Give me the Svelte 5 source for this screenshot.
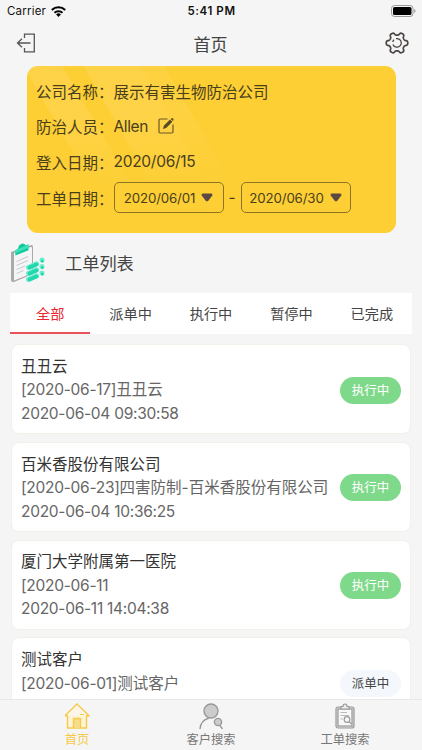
<script lang="ts">
  interface Order {
    customer: string;
    date: string;
    title: string;
    time: string;
    status: string;
  }

  const tabs = ["全部", "派单中", "执行中", "暂停中", "已完成"];

  const orders: Order[] = [
    { customer: "丑丑云", date: "[2020-06-17]", title: "丑丑云", time: "2020-06-04 09:30:58", status: "执行中" },
    { customer: "百米香股份有限公司", date: "[2020-06-23]", title: "四害防制-百米香股份有限公司", time: "2020-06-04 10:36:25", status: "执行中" },
    { customer: "厦门大学附属第一医院", date: "[2020-06-11", title: "", time: "2020-06-11 14:04:38", status: "执行中" },
    { customer: "测试客户", date: "[2020-06-01]", title: "测试客户", time: "", status: "派单中" },
  ];

  let activeTab = $state("全部");

  // six-toothed gear outline, centred on 12,12
  const gear = Array.from({ length: 120 }, (_, i) => {
    const a = (i / 120) * Math.PI * 2;
    const r = 9.3 + 1.5 * Math.tanh(2 * Math.cos(6 * a));
    return `${(12 + r * Math.cos(a)).toFixed(2)},${(12 + r * Math.sin(a)).toFixed(2)}`;
  }).join(" ");
</script>

{#snippet dateBox(value: string)}
  <button class="date-box">
    <span>{value}</span>
    <svg width="12" height="9" viewBox="0 0 12 9"><path d="M1.7.5h8.6q1.5.2 1 2L7.3 7.7Q6 9 4.7 7.7L.7 2.5Q.2.7 1.7.5z" fill="#5c4a42" /></svg>
  </button>
{/snippet}

<div class="screen">
  <div class="status-bar">
    <div class="carrier">
      <span>Carrier</span>
      <svg width="15" height="11" viewBox="0 0 15 11">
        <path d="M7.5 11 5.1 8.4a3.5 3.5 0 0 1 4.8 0z" />
        <g fill="none" stroke="#000" stroke-width="2">
          <path d="M3.5 6.8a5.8 5.8 0 0 1 8 0" />
          <path d="M.8 4a9.6 9.6 0 0 1 13.4 0" />
        </g>
      </svg>
    </div>
    <span class="clock">5:41 PM</span>
    <svg class="battery" width="25" height="12" viewBox="0 0 25 12">
      <rect x=".5" y=".5" width="21.5" height="11" rx="3" fill="none" stroke="#999" />
      <rect x="2" y="2" width="18.5" height="8" rx="1.6" />
      <path d="M23.2 4v4q1.3-.6 1.3-2t-1.3-2z" fill="#999" />
    </svg>
  </div>

  <header>
    <svg width="20" height="20" viewBox="0 0 20 20" fill="none" stroke="#555" stroke-width="1.3">
      <path d="M8.5 5V1.2h9.8v17.6H8.5V15M14.5 10H1.5M6 5.8 1.5 10 6 14.2" />
    </svg>
    <h1>首页</h1>
    <svg width="24" height="24" viewBox="0 0 24 24" fill="none" stroke="#4a4442" stroke-width="1.7" stroke-linejoin="round">
      <polygon points={gear} />
      <path d="M7.9 13.5a4.4 4.4 0 0 0 8.4-1.500 4.4 4.4 0 0 0-5.3-4.3M9 8.8a4.4 4.4 0 0 0-1.3 2.2" stroke-width="1.3" />
    </svg>
  </header>

  <section class="profile">
    <div class="field"><span>公司名称：</span><span>展示有害生物防治公司</span></div>
    <div class="field">
      <span>防治人员：</span><span class="name">Allen</span>
      <svg class="edit" width="16" height="16" viewBox="0 0 16 16">
        <path d="M9.5 1H2.2Q1 1 1 2.2v11.6Q1 15 2.2 15h11.6q1.2 0 1.2-1.2V6.5" fill="none" stroke="#6b5726" stroke-width="1.2" />
        <path d="m5 11 .8-3.2L12 1.5l2.4 2.3L8.1 10zM12.7.9l.7-.7Q14.2-.2 15 .6t.5 1.5l-.6.9z" fill="#594a25" />
      </svg>
    </div>
    <div class="field"><span>登入日期：</span><span class="num">2020/06/15</span></div>
    <div class="field">
      <span>工单日期：</span>
      {@render dateBox("2020/06/01")}
      <span class="dash">-</span>
      {@render dateBox("2020/06/30")}
    </div>
  </section>

  <div class="list-title">
    <svg width="36" height="40" viewBox="0 0 36 40">
      <path d="M1 9 21.5 2q1.5 0 1.5 1.5V31L4 39q-3 0-3-2z" fill="#aaa" />
      <path d="M4 10 20.5 4q1.5-.3 1.5 1.2v25L4 37.5z" fill="#f5f5f7" />
      <path d="M6.5 18.5 18 13.5M6.5 22.5 18 17.5M6.5 26.5 15 23M6.5 30.5l7-3" stroke="#c8c8cc" />
      <path d="m5 7.5 3-1.7q.2-3.5 3-4.8 3-1.3 4.6 1.2L18.5 1.5v5.7L5.5 12.5z" fill="#13c99a" />
      <path d="m5 7.5 13.5-6v3L5 10.5z" fill="#39e2bb" />
      <g stroke-linecap="round">
        <path d="m18.500 24.5 8-3.7M18.500 30.5l8-3.7M18.500 36.5l8-3.7M32 17v.1M32 23.5v.1M32 30v.1" stroke="#70edd0" stroke-width="5" />
        <path d="m19.500 24.5 7-3M19.500 30.5l7-3M19.500 36.5l7-3" stroke="#22d8ad" stroke-width="4" />
        <path d="M32.300 18v.1M32.300 24.5v.1M32.300 31v.1" stroke="#22d8ad" stroke-width="3" />
      </g>
    </svg>
    <h2>工单列表</h2>
  </div>

  <nav class="tabs">
    {#each tabs as tab}
      <button class:active={activeTab === tab} onclick={() => (activeTab = tab)}>{tab}</button>
    {/each}
  </nav>

  <main>
    {#each orders as order}
      <article>
        <div class="info">
          <h3>{order.customer}</h3>
          <p><span class="num">{order.date}</span>{order.title}</p>
          <p class="num">{order.time}</p>
        </div>
        <span class="badge" class:pending={order.status === "派单中"}>{order.status}</span>
      </article>
    {/each}
  </main>

  <footer>
    <button class="selected">
      <svg width="26" height="26" viewBox="0 0 26 26" fill="none" stroke="#f5cb4b" stroke-width="1.4">
        <path d="M3.5 12v13h19V12" fill="#fdf3d5" />
        <path d="M1 12.8 13 1l12 11.8h-3M1 12.8h3" fill="#fbf6e7" />
        <path d="M9.5 25v-9.5h7V25" fill="#f8dd89" />
        <path d="M16 11.5h4" stroke-width="1" />
      </svg>
      <span>首页</span>
    </button>
    <button>
      <svg width="26" height="26" viewBox="0 0 26 26" fill="none" stroke="#999" stroke-width="1.4">
        <circle cx="13" cy="8" r="7" fill="#ccc" />
        <path d="M2 26q.5-8.5 9-11" />
        <circle cx="20" cy="19" r="3.6" fill="#ccc" />
        <path d="m21.5 22 3 4" />
      </svg>
      <span>客户搜索</span>
    </button>
    <button>
      <svg width="26" height="26" viewBox="0 0 26 26" fill="none" stroke="#999" stroke-width="1.2">
        <rect x="4" y="4" width="18" height="21" rx="2" fill="#ddd" />
        <rect x="6" y="6" width="14" height="17" fill="#f8f8f8" />
        <path d="M9 6V3.5h2q0-2.500 2-2.500t2 2.500h2V6z" fill="#eee" />
        <path d="M8.5 9.5H15M8.5 12.5H17M8.5 16H11" stroke="#bbb" />
        <circle cx="15" cy="16.5" r="2.8" />
        <path d="m17 18.5 2.5 2.5" />
      </svg>
      <span>工单搜索</span>
    </button>
  </footer>
</div>

<style>
  .screen {
    display: flex;
    flex-direction: column;
    width: 422px;
    height: 750px;
    overflow: hidden;
    background: #f5f5f5;
    color: #444;
    font-family: Inter, "Noto Sans CJK SC", sans-serif;
    font-size: 15.5px;
  }

  h1, h2, h3, p {
    margin: 0;
    font-weight: 400;
  }

  button {
    padding: 0;
    border: none;
    background: none;
    color: inherit;
    font: inherit;
  }

  svg {
    display: block;
    flex-shrink: 0;
  }

  .num {
    letter-spacing: -0.28px;
  }

  .status-bar {
    display: grid;
    grid-template-columns: 1fr auto 1fr;
    align-items: center;
    height: 22px;
    padding: 0 6px 0 7px;
    color: #111;
    font-size: 11.5px;
    flex-shrink: 0;
  }

  .carrier {
    display: flex;
    align-items: center;
    gap: 5px;
    letter-spacing: 0.2px;
  }

  .clock {
    font-weight: 600;
    letter-spacing: 0.6px;
  }

  .battery {
    justify-self: end;
  }

  header {
    display: flex;
    align-items: center;
    justify-content: space-between;
    height: 42px;
    margin-bottom: 2px;
    padding: 0 13px 0 16px;
    flex-shrink: 0;
  }

  h1 {
    font-size: 17px;
  }

  .profile {
    display: flex;
    flex-direction: column;
    box-sizing: border-box;
    width: 369px;
    height: 167px;
    margin-left: 26.5px;
    padding: 7px 9.5px 0;
    border-radius: 11px;
    background:
      linear-gradient(to bottom, transparent 50px, #fdcf35 120px),
      linear-gradient(60deg, transparent 22%, #fed55399 22% 35%, transparent 35% 42%, #fed55399 42% 61%, #fed55355 61% 69%, transparent 69%) 0 0 / 230px 120px no-repeat,
      #fdcf35;
    color: #493e1c;
    flex-shrink: 0;
  }

  .field {
    display: flex;
    align-items: center;
    height: 35.6px;
  }

  .name {
    letter-spacing: -0.4px;
  }

  .edit {
    margin-left: 10px;
  }

  .date-box {
    display: flex;
    align-items: center;
    justify-content: center;
    gap: 6px;
    box-sizing: border-box;
    width: 110px;
    height: 31px;
    border: 1px solid #8b7424;
    border-radius: 5px;
    font-size: 13.3px;
    letter-spacing: -0.15px;
  }

  .dash {
    width: 17px;
    text-align: center;
  }

  .list-title {
    display: flex;
    align-items: center;
    gap: 19px;
    height: 60px;
    padding-left: 10px;
    flex-shrink: 0;
  }

  h2 {
    margin-top: -2px;
    font-size: 17.2px;
  }

  .tabs {
    display: flex;
    height: 41px;
    margin: 0 10px 10px;
    background: #fff;
    font-size: 14.2px;
    flex-shrink: 0;
  }

  .tabs button {
    flex: 1;
    border-bottom: 2px solid transparent;
  }

  .tabs .active {
    border-color: #ea5359;
    color: #e7292f;
  }

  main {
    display: flex;
    flex-direction: column;
    gap: 7.8px;
    flex: 1;
    min-height: 0;
    padding: 0 11px 0 10.5px;
    overflow: hidden;
  }

  article {
    display: flex;
    align-items: center;
    justify-content: space-between;
    box-sizing: border-box;
    height: 90px;
    padding: 2px 9px 0 9.5px;
    border: 1px solid #f3f0e9;
    border-radius: 8px;
    background: #fff;
    flex-shrink: 0;
  }

  .info {
    line-height: 23.5px;
    white-space: nowrap;
  }

  h3 {
    color: #333;
    font-size: 15.5px;
  }

  p {
    height: 23.5px;
    color: #666;
  }

  .badge {
    width: 61px;
    border-radius: 14px;
    background: #7fd98a;
    color: #fff;
    font-size: 12.5px;
    line-height: 27px;
    text-align: center;
    flex-shrink: 0;
  }

  .badge.pending {
    background: #f4f8fc;
    color: #444;
  }

  footer {
    display: flex;
    height: 51px;
    box-sizing: border-box;
    padding: 3px 10px 0;
    border-top: 1px solid #e8e8e8;
    background: #f5f5f5;
    flex-shrink: 0;
  }

  footer button {
    display: flex;
    flex: 1;
    flex-direction: column;
    align-items: center;
    gap: 2px;
    color: #777;
    font-size: 12.3px;
    line-height: 18px;
  }

  footer .selected {
    color: #f5c944;
  }
</style>
